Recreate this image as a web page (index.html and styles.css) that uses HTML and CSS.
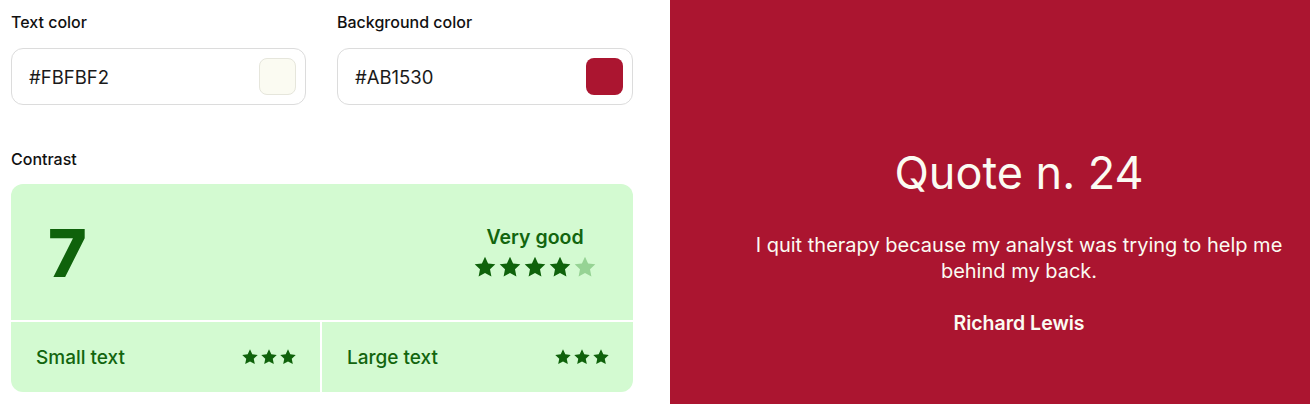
FILE: index.html
```html
<!DOCTYPE html>
<html>
<head>
<meta charset="utf-8">
<link rel="stylesheet" href="styles.css">
</head>
<body>
<div class="page">
  <section class="left">
    <div class="fields">
      <div class="field">
        <div class="label">Text color</div>
        <div class="input"><span>#FBFBF2</span><span class="swatch light"></span></div>
      </div>
      <div class="field">
        <div class="label">Background color</div>
        <div class="input"><span>#AB1530</span><span class="swatch red"></span></div>
      </div>
    </div>
    <div class="label contrast-label">Contrast</div>
    <div class="card">
      <div class="card-top">
        <div class="score">7</div>
        <div class="rating">
          <div class="rating-text">Very good</div>
          <div class="stars big">
            <svg viewBox="0 0 24 24"><path d="M12 1.8l3.1 6.6 7.2.9-5.3 5 1.4 7.1L12 17.9l-6.4 3.5 1.4-7.1-5.3-5 7.2-.9z"/></svg>
            <svg viewBox="0 0 24 24"><path d="M12 1.8l3.1 6.6 7.2.9-5.3 5 1.4 7.1L12 17.9l-6.4 3.5 1.4-7.1-5.3-5 7.2-.9z"/></svg>
            <svg viewBox="0 0 24 24"><path d="M12 1.8l3.1 6.6 7.2.9-5.3 5 1.4 7.1L12 17.9l-6.4 3.5 1.4-7.1-5.3-5 7.2-.9z"/></svg>
            <svg viewBox="0 0 24 24"><path d="M12 1.8l3.1 6.6 7.2.9-5.3 5 1.4 7.1L12 17.9l-6.4 3.5 1.4-7.1-5.3-5 7.2-.9z"/></svg>
            <svg viewBox="0 0 24 24" class="off"><path d="M12 1.8l3.1 6.6 7.2.9-5.3 5 1.4 7.1L12 17.9l-6.4 3.5 1.4-7.1-5.3-5 7.2-.9z"/></svg>
          </div>
        </div>
      </div>
      <div class="card-bottom">
        <div class="cell">
          <span>Small text</span>
          <div class="stars small">
            <svg viewBox="0 0 24 24"><path d="M12 1.8l3.1 6.6 7.2.9-5.3 5 1.4 7.1L12 17.9l-6.4 3.5 1.4-7.1-5.3-5 7.2-.9z"/></svg>
            <svg viewBox="0 0 24 24"><path d="M12 1.8l3.1 6.6 7.2.9-5.3 5 1.4 7.1L12 17.9l-6.4 3.5 1.4-7.1-5.3-5 7.2-.9z"/></svg>
            <svg viewBox="0 0 24 24"><path d="M12 1.8l3.1 6.6 7.2.9-5.3 5 1.4 7.1L12 17.9l-6.4 3.5 1.4-7.1-5.3-5 7.2-.9z"/></svg>
          </div>
        </div>
        <div class="cell">
          <span>Large text</span>
          <div class="stars small">
            <svg viewBox="0 0 24 24"><path d="M12 1.8l3.1 6.6 7.2.9-5.3 5 1.4 7.1L12 17.9l-6.4 3.5 1.4-7.1-5.3-5 7.2-.9z"/></svg>
            <svg viewBox="0 0 24 24"><path d="M12 1.8l3.1 6.6 7.2.9-5.3 5 1.4 7.1L12 17.9l-6.4 3.5 1.4-7.1-5.3-5 7.2-.9z"/></svg>
            <svg viewBox="0 0 24 24"><path d="M12 1.8l3.1 6.6 7.2.9-5.3 5 1.4 7.1L12 17.9l-6.4 3.5 1.4-7.1-5.3-5 7.2-.9z"/></svg>
          </div>
        </div>
      </div>
    </div>
  </section>
  <section class="right">
    <div class="quote">
      <h1 class="title">Quote n. 24</h1>
      <p class="text">I quit therapy because my analyst was trying to help me behind my back.</p>
      <p class="author">Richard Lewis</p>
    </div>
  </section>
</div>
</body>
</html>
```
FILE: styles.css
```css
* { box-sizing: border-box; }
html, body { margin: 0; padding: 0; }
body {
  font-family: Inter, "Noto Sans", sans-serif;
  background: #ffffff;
  color: #111111;
}
.page {
  display: flex;
  width: 1310px;
  height: 404px;
  overflow: hidden;
}
.left {
  width: 670px;
  flex: none;
  padding: 12px 37px 0 11px;
}
.fields {
  display: grid;
  grid-template-columns: 295px 296px;
  column-gap: 31px;
}
.label {
  font-size: 16px;
  line-height: 20px;
  font-weight: 500;
  color: #111;
  margin-bottom: 16px;
}
.input {
  height: 57px;
  border: 1px solid #dcdcdc;
  border-radius: 12px;
  display: flex;
  align-items: center;
  justify-content: space-between;
  padding: 0 9px 0 17px;
  font-size: 18.5px;
  color: #1a1a1a;
}
.swatch {
  width: 37px;
  height: 37px;
  border-radius: 8px;
}
.swatch.light { background: #FBFBF2; border: 1px solid #e6e6dc; }
.swatch.red { background: #AB1530; }
.contrast-label {
  margin-top: 44px;
  margin-bottom: 15px;
}
.card {
  width: 622px;
  height: 208px;
  background: #d3fad1;
  border-radius: 12px;
  display: flex;
  flex-direction: column;
  overflow: hidden;
  color: #12650e;
}
.card-top {
  height: 138px;
  display: flex;
  align-items: center;
  justify-content: space-between;
  padding: 0 36px 0 37px;
  border-bottom: 2px solid #ffffff;
}
.score {
  font-size: 66px;
  font-weight: 800;
  line-height: 1;
  color: #0f620b;
  margin-top: 2px;
}
.rating {
  display: flex;
  flex-direction: column;
  align-items: center;
}
.rating-text {
  font-size: 19.5px;
  font-weight: 600;
  line-height: 24px;
  margin-bottom: 6px;
}
.stars { display: flex; }
.stars svg { fill: #0f620b; display: block; }
.stars svg.off { fill: #96d394; }
.stars.big { gap: 1px; }
.stars.big svg { width: 24px; height: 24px; }
.stars.small { gap: 1px; }
.stars.small svg { width: 18px; height: 18px; }
.card-bottom {
  flex: 1;
  display: grid;
  grid-template-columns: 311px 1fr;
}
.cell {
  display: flex;
  align-items: center;
  justify-content: space-between;
  padding: 0 23px 0 25px;
  font-size: 19px;
  font-weight: 500;
}
.cell:first-child { border-right: 2px solid #ffffff; padding-right: 23px; }
.right {
  flex: 1;
  background: #AB1530;
  color: #FBFBF2;
  display: flex;
  justify-content: center;
  padding: 146px 0 0 58px;
}
.quote {
  width: 560px;
  text-align: center;
}
.title {
  margin: 0;
  font-size: 45px;
  font-weight: 400;
  line-height: 54px;
}
.text {
  margin: 32px 0 0;
  font-size: 20px;
  line-height: 26px;
}
.author {
  margin: 27px 0 0;
  font-size: 19.5px;
  font-weight: 600;
  line-height: 24px;
}
```
